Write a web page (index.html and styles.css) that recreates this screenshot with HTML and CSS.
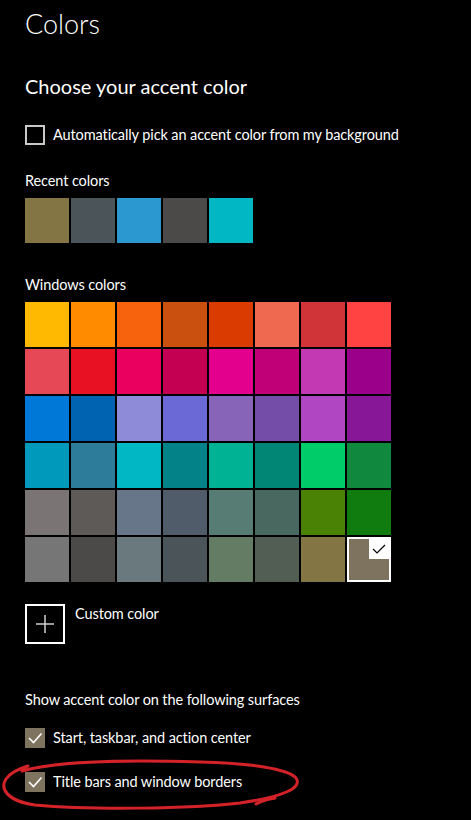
FILE: index.html
```html
<!DOCTYPE html>
<html lang="en">
<head>
    <meta charset="UTF-8">
    <meta name="viewport" content="width=device-width, initial-scale=1.0">
    <title>Colors</title>
    <link rel="stylesheet" href="styles.css">
</head>
<body>
    <div class="page">
        <h1 class="title">Colors</h1>
        <h2 class="subtitle">Choose your accent color</h2>

        <label class="check auto-pick">
            <span class="box"></span>
            <span>Automatically pick an accent color from my background</span>
        </label>

        <div class="section-label recent-label">Recent colors</div>
        <div class="recent">
            <span class="swatch" style="background:#847545"></span>
            <span class="swatch" style="background:#4a5459"></span>
            <span class="swatch" style="background:#2b98d0"></span>
            <span class="swatch" style="background:#4c4a48"></span>
            <span class="swatch" style="background:#00b7c3"></span>
        </div>

        <div class="section-label windows-label">Windows colors</div>
        <div class="palette">
            <span class="swatch" style="background:#ffb900"></span>
            <span class="swatch" style="background:#ff8c00"></span>
            <span class="swatch" style="background:#f7630c"></span>
            <span class="swatch" style="background:#ca5010"></span>
            <span class="swatch" style="background:#da3b01"></span>
            <span class="swatch" style="background:#ef6950"></span>
            <span class="swatch" style="background:#d13438"></span>
            <span class="swatch" style="background:#ff4343"></span>

            <span class="swatch" style="background:#e74856"></span>
            <span class="swatch" style="background:#e81123"></span>
            <span class="swatch" style="background:#ea005e"></span>
            <span class="swatch" style="background:#c30052"></span>
            <span class="swatch" style="background:#e3008c"></span>
            <span class="swatch" style="background:#bf0077"></span>
            <span class="swatch" style="background:#c239b3"></span>
            <span class="swatch" style="background:#9a0089"></span>

            <span class="swatch" style="background:#0078d7"></span>
            <span class="swatch" style="background:#0063b1"></span>
            <span class="swatch" style="background:#8e8cd8"></span>
            <span class="swatch" style="background:#6b69d6"></span>
            <span class="swatch" style="background:#8764b8"></span>
            <span class="swatch" style="background:#744da9"></span>
            <span class="swatch" style="background:#b146c2"></span>
            <span class="swatch" style="background:#881798"></span>

            <span class="swatch" style="background:#0099bc"></span>
            <span class="swatch" style="background:#2d7d9a"></span>
            <span class="swatch" style="background:#00b7c3"></span>
            <span class="swatch" style="background:#038387"></span>
            <span class="swatch" style="background:#00b294"></span>
            <span class="swatch" style="background:#018574"></span>
            <span class="swatch" style="background:#00cc6a"></span>
            <span class="swatch" style="background:#10893e"></span>

            <span class="swatch" style="background:#7a7574"></span>
            <span class="swatch" style="background:#5d5a58"></span>
            <span class="swatch" style="background:#68768a"></span>
            <span class="swatch" style="background:#515c6b"></span>
            <span class="swatch" style="background:#567c73"></span>
            <span class="swatch" style="background:#486860"></span>
            <span class="swatch" style="background:#498205"></span>
            <span class="swatch" style="background:#107c10"></span>

            <span class="swatch" style="background:#767676"></span>
            <span class="swatch" style="background:#4c4a48"></span>
            <span class="swatch" style="background:#69797e"></span>
            <span class="swatch" style="background:#4a5459"></span>
            <span class="swatch" style="background:#647c64"></span>
            <span class="swatch" style="background:#525e54"></span>
            <span class="swatch" style="background:#847545"></span>
            <span class="swatch selected" style="background:#7e735f">
                <span class="corner">
                    <svg width="14" height="10" viewBox="0 0 14 10"><path d="M1 5 L5 9 L13 1" fill="none" stroke="#000" stroke-width="1.2"/></svg>
                </span>
            </span>
        </div>

        <div class="custom">
            <span class="plus-box">
                <svg width="20" height="20" viewBox="0 0 20 20"><path d="M10 1 V19 M1 10 H19" stroke="#cfcfcf" stroke-width="1.5"/></svg>
            </span>
            <span class="custom-text">Custom color</span>
        </div>

        <div class="section-label surfaces-label">Show accent color on the following surfaces</div>

        <label class="check checked first">
            <span class="box">
                <svg width="20" height="20" viewBox="0 0 20 20"><path d="M4 10 L8.5 14.5 L16.5 5.5" fill="none" stroke="#fff" stroke-width="1.6"/></svg>
            </span>
            <span>Start, taskbar, and action center</span>
        </label>
        <label class="check checked second">
            <span class="box">
                <svg width="20" height="20" viewBox="0 0 20 20"><path d="M4 10 L8.5 14.5 L16.5 5.5" fill="none" stroke="#fff" stroke-width="1.6"/></svg>
            </span>
            <span>Title bars and window borders</span>
        </label>

        <!-- red marker scribble around the last option -->
        <svg class="scribble" width="471" height="820" viewBox="0 0 471 820">
            <path d="M22 771 C60 760 140 760 200 762 C250 763 288 769 296 778 C303 788 282 797 240 803 C190 809 90 810 35 805 C6 801 0 788 6 779 C10 773 18 769 28 766" fill="none" stroke="#d42229" stroke-width="3" stroke-linecap="round"/>
            <path d="M256 804 C262 800 269 799 275 798" fill="none" stroke="#d42229" stroke-width="3" stroke-linecap="round"/>
        </svg>
    </div>
</body>
</html>
```

FILE: styles.css
```css
body {
    margin: 0;
    padding: 0;
    background-color: #000;
    color: #fff;
    font-family: Lato, "Open Sans", sans-serif;
    font-size: 14.5px;
    letter-spacing: -0.1px;
    line-height: 20px;
}
.page {
    position: relative;
    width: 471px;
    height: 820px;
    padding-left: 25px;
    box-sizing: border-box;
    overflow: hidden;
}
.title {
    margin: 7px 0 0;
    font-size: 27px;
    line-height: 34px;
    font-weight: 300;
    letter-spacing: 0;
}
.subtitle {
    margin: 32px 0 0;
    font-size: 20px;
    line-height: 26px;
    font-weight: 400;
    letter-spacing: 0;
}
.check {
    display: flex;
    align-items: center;
    gap: 8px;
    height: 20px;
}
.check .box {
    width: 20px;
    height: 20px;
    box-sizing: border-box;
    border: 2px solid #c8c8c8;
    flex-shrink: 0;
}
.check.checked .box {
    border: none;
    background-color: #7e735f;
}
.check .box svg {
    display: block;
}
.auto-pick {
    margin-top: 26px;
}
.first {
    margin-top: 18px;
}
.second {
    margin-top: 24px;
}
.recent-label {
    margin-top: 26px;
}
.windows-label {
    margin-top: 32px;
}
.surfaces-label {
    margin-top: 46px;
}
.recent {
    display: flex;
    gap: 2px;
    margin-top: 7px;
}
.swatch {
    display: block;
    width: 44px;
    height: 45px;
}
.palette {
    display: grid;
    grid-template-columns: repeat(8, 44px);
    grid-auto-rows: 45px;
    gap: 2px;
    margin-top: 7px;
}
.swatch.selected {
    position: relative;
    box-shadow: inset 0 0 0 2px #fff;
}
.corner {
    position: absolute;
    top: 2px;
    right: 2px;
    width: 20px;
    height: 20px;
    background: #fff;
    display: flex;
    align-items: center;
    justify-content: center;
}
.custom {
    display: flex;
    align-items: flex-start;
    gap: 10px;
    margin-top: 22px;
}
.plus-box {
    width: 40px;
    height: 40px;
    box-sizing: border-box;
    border: 2px solid #fff;
    display: flex;
    align-items: center;
    justify-content: center;
}
.plus-box svg {
    display: block;
}
.scribble {
    position: absolute;
    left: 0;
    top: 0;
    pointer-events: none;
}
```
